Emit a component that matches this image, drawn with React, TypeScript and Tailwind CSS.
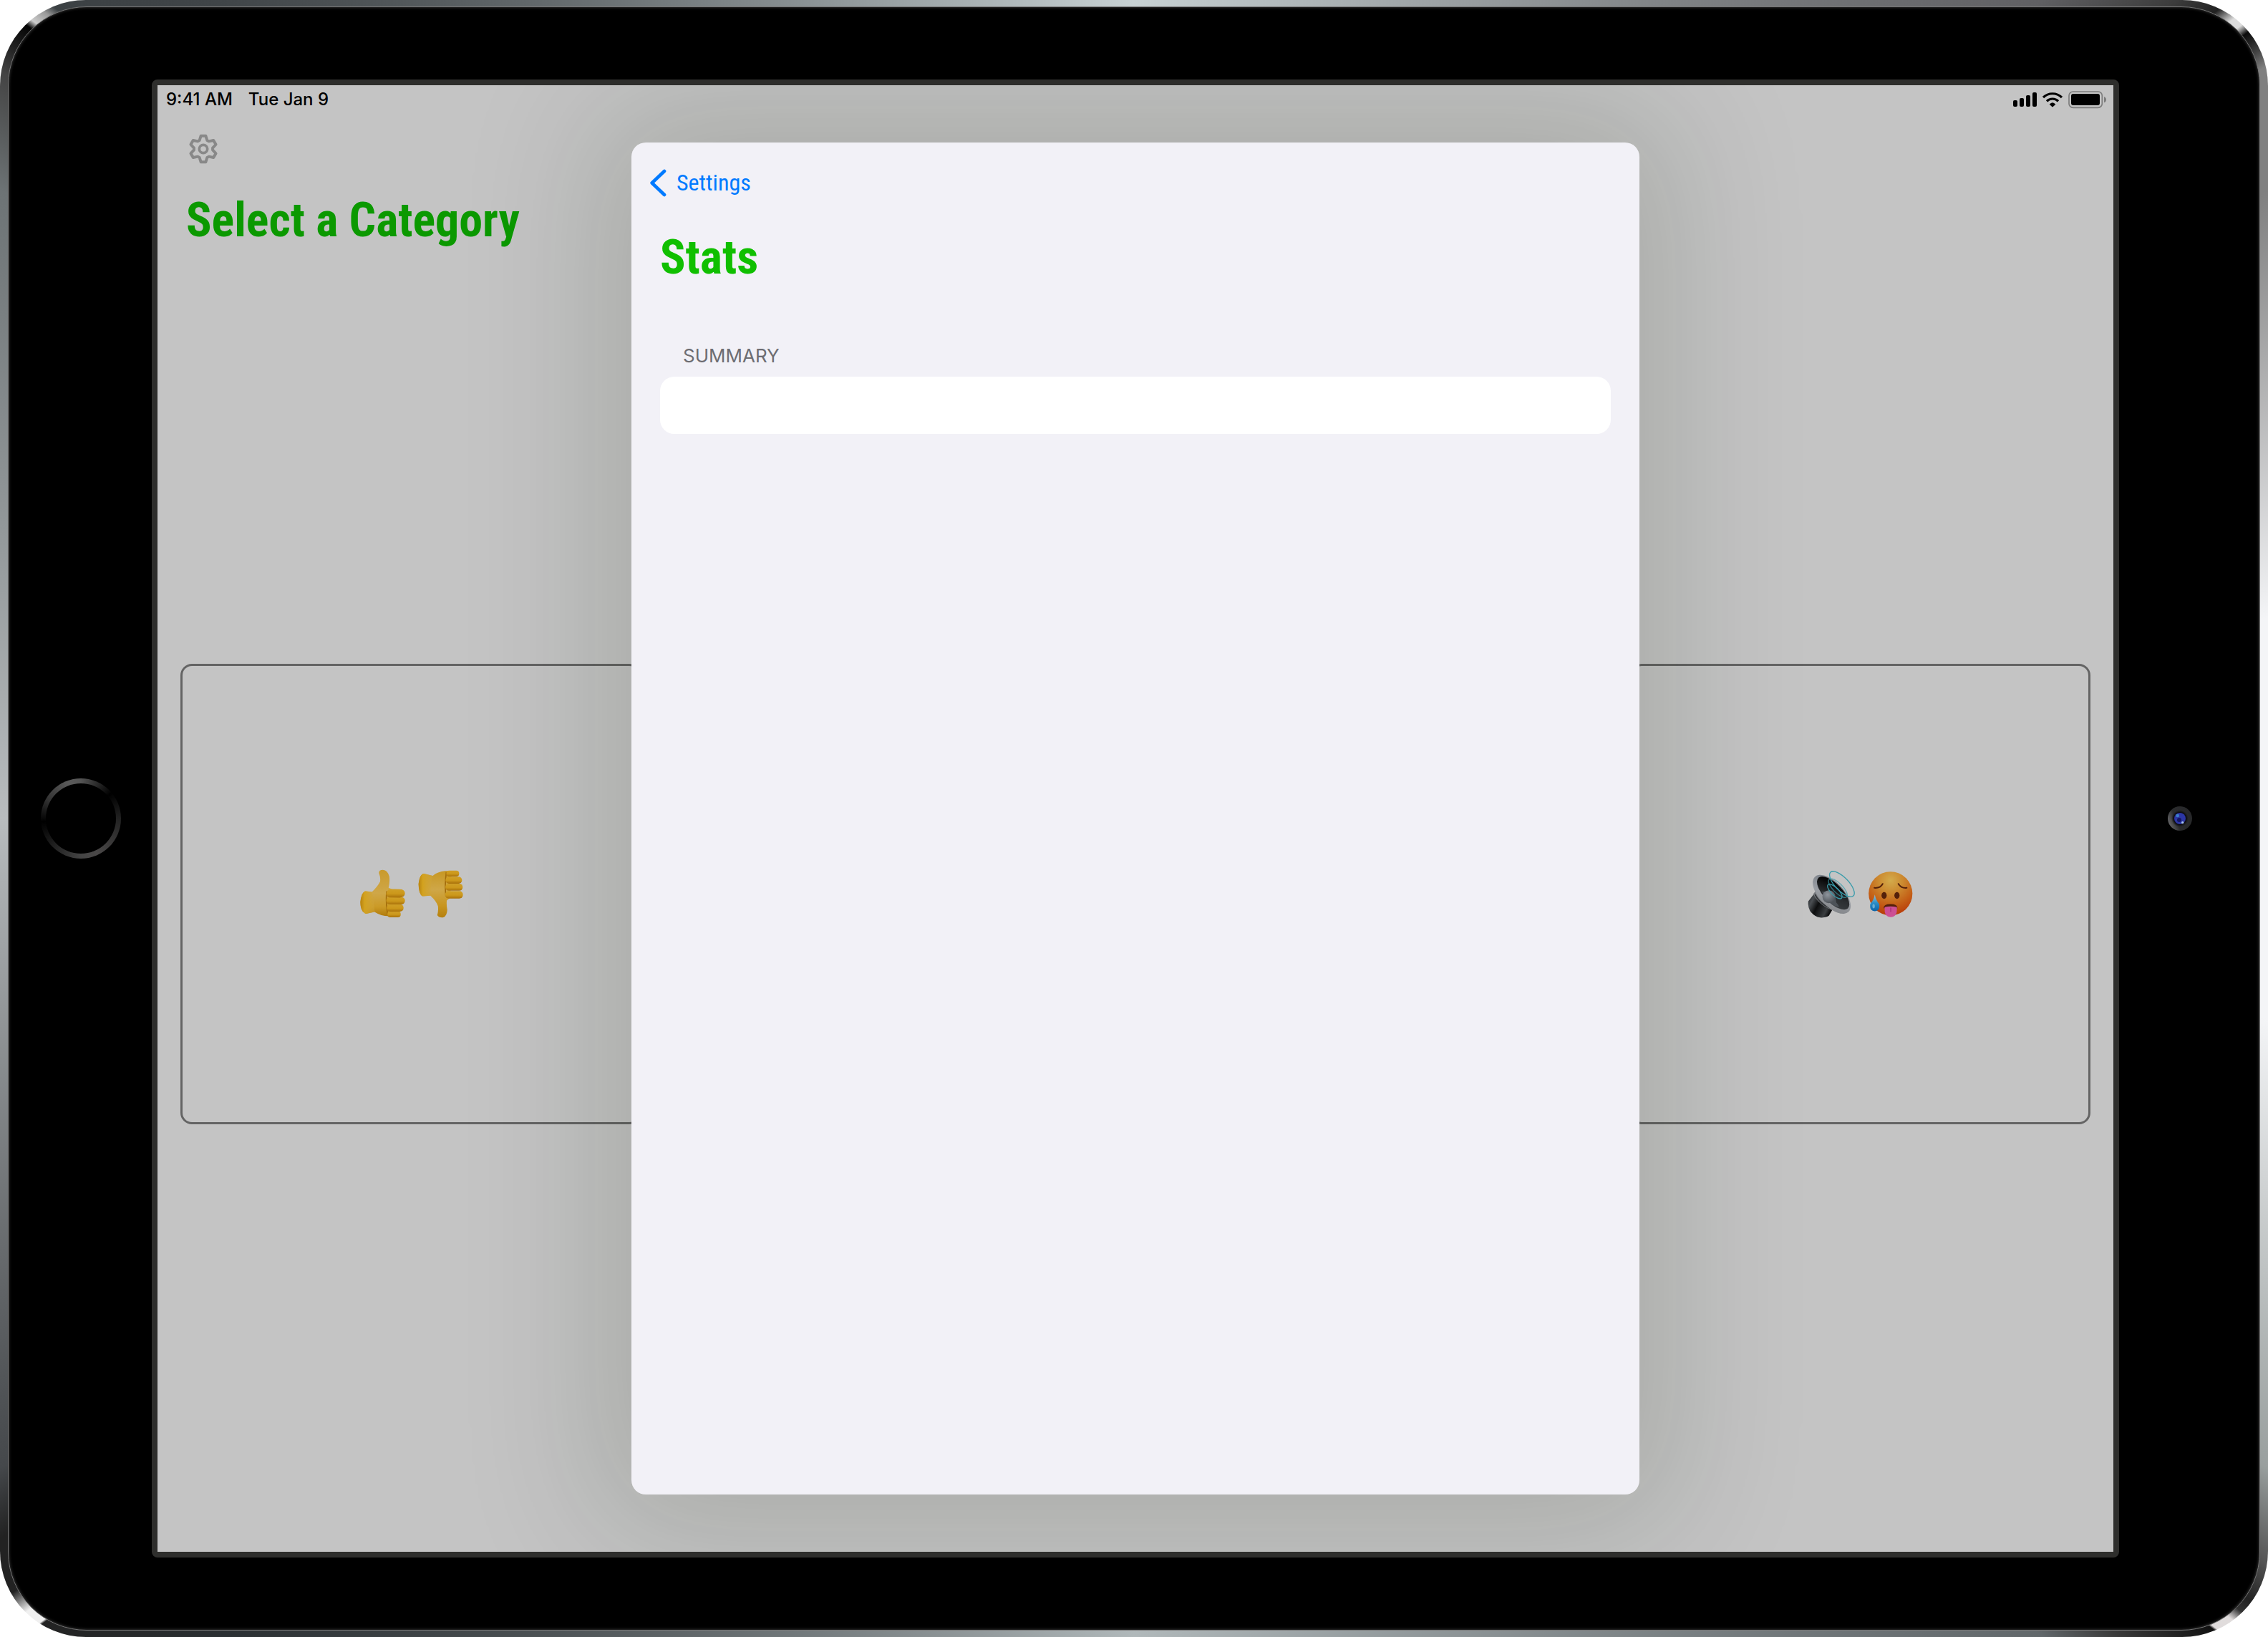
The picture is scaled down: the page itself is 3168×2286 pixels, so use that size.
import React from "react";

const gearOutline = (() => {
  const tooth: [number, number][] = [
    [-16, -36],
    [-10, -55],
    [10, -55],
    [16, -36],
  ];
  const points: string[] = [];
  for (let i = 0; i < 6; i++) {
    const a = (i * Math.PI) / 3;
    for (const [x, y] of tooth) {
      points.push(
        `${(x * Math.cos(a) - y * Math.sin(a)).toFixed(1)} ${(x * Math.sin(a) + y * Math.cos(a)).toFixed(1)}`,
      );
    }
  }
  return `M${points.join("L")}Z`;
})();

function GearIcon() {
  return (
    <svg viewBox="-60 -63 120 126" className="h-[42px] w-10" fill="none" stroke="#888888" aria-hidden="true">
      <path d={gearOutline} strokeWidth="12" strokeLinejoin="round" />
      <circle r="17" strokeWidth="11" />
    </svg>
  );
}

function StatusIcons() {
  return (
    <svg viewBox="150 78 402 78" className="h-[26px] w-[134px]" role="img" aria-label="Signal, Wi-Fi and battery">
      <rect x="156" y="120" width="18" height="27" rx="6" />
      <rect x="183" y="111" width="18" height="36" rx="6" />
      <rect x="210" y="99" width="18" height="48" rx="6" />
      <rect x="237" y="87" width="18" height="60" rx="6" />
      <g fill="none" stroke="#000000" strokeWidth="9.5">
        <path d="M282 108A56 56 0 0 1 360 108" />
        <path d="M297 124A34 34 0 0 1 345 124" />
      </g>
      <path d="M308 137Q321 122 334 137L324 146Q321 149 318 146Z" />
      <rect x="390" y="84" width="139" height="67" rx="17" fill="none" stroke="#7c7c7c" strokeWidth="5" />
      <rect x="399" y="93" width="120" height="48" rx="9" />
      <path d="M537 105Q546 109 546 117.500Q546 126 537 130Z" fill="#7c7c7c" />
    </svg>
  );
}

function ThumbsEmoji() {
  return (
    <svg viewBox="91 100 444 205" className="h-[68px] w-[148px]" role="img" aria-label="Thumbs up and thumbs down">
      <defs>
        <linearGradient id="palm" x1="0" y1="0" x2="0" y2="1">
          <stop offset="0" stopColor="#c99a2c" />
          <stop offset="0.5" stopColor="#cfa748" />
          <stop offset="0.8" stopColor="#cb9a26" />
          <stop offset="1" stopColor="#b07a0c" />
        </linearGradient>
        <linearGradient id="palmDown" x1="0" y1="0" x2="0" y2="1">
          <stop offset="0" stopColor="#c79722" />
          <stop offset="0.4" stopColor="#cfa748" />
          <stop offset="0.75" stopColor="#c8951f" />
          <stop offset="1" stopColor="#b5800f" />
        </linearGradient>
        <linearGradient id="finger" x1="0" y1="0" x2="0" y2="1">
          <stop offset="0" stopColor="#cf9f26" />
          <stop offset="0.55" stopColor="#cc981b" />
          <stop offset="1" stopColor="#a8700a" />
        </linearGradient>
        <linearGradient id="wrist" x1="0" y1="0" x2="1" y2="0">
          <stop offset="0" stopColor="#b8830f" />
          <stop offset="0.3" stopColor="#d3a21f" />
          <stop offset="1" stopColor="#cfa53c" stopOpacity="0.4" />
        </linearGradient>
      </defs>
      <path
        d="M122 192L149 195Q172 173 183 152Q186 135 178 115Q178 102 195 102Q215 103 222 130Q225 152 219 178Q232 184 245 186L250 290L222 297Q190 298 160 279L124 287Q101 281 100 238Q104 194 122 192Z"
        fill="url(#palm)"
      />
      <path d="M122 192L149 195Q158 235 160 279L124 287Q101 281 100 238Q104 194 122 192Z" fill="url(#wrist)" />
      <path d="M211 192Q206 240 216 296" fill="none" stroke="#a36c0a" strokeWidth="5" />
      <rect x="214" y="276" width="56" height="26" rx="12" fill="url(#finger)" />
      <rect x="211" y="247" width="71" height="31" rx="15" fill="url(#finger)" />
      <rect x="209" y="216" width="79" height="32" rx="16" fill="url(#finger)" />
      <path d="M219 185Q235 181 265 184Q287 184 288 201Q287 217 266 219L222 218Q208 214 209 203Q211 190 219 185Z" fill="url(#finger)" />

      <path
        d="M368 118L405 127Q425 110 456 107L485 106L478 220L464 231Q462 248 466 270Q465 295 450 302Q432 305 424 293Q429 275 427 255Q420 234 395 211L362 213Q346 207 345 162Q350 119 368 118Z"
        fill="url(#palmDown)"
      />
      <path d="M368 118L405 127Q393 165 397 211L362 213Q346 207 345 162Q350 119 368 118Z" fill="url(#wrist)" />
      <path d="M462 112Q455 165 460 214" fill="none" stroke="#a36c0a" strokeWidth="5" />
      <rect x="462" y="105" width="54" height="25" rx="12" fill="url(#finger)" />
      <rect x="459" y="131" width="69" height="29" rx="14" fill="url(#finger)" />
      <rect x="458" y="160" width="73" height="30" rx="15" fill="url(#finger)" />
      <rect x="457" y="191" width="75" height="32" rx="15" fill="url(#finger)" />
    </svg>
  );
}

function LoudHotEmoji() {
  return (
    <svg viewBox="105 105 445 200" className="h-[67px] w-[148px]" role="img" aria-label="Loudspeaker and hot face">
      <defs>
        <linearGradient id="magnet" x1="0" y1="0" x2="1" y2="0.5">
          <stop offset="0" stopColor="#16181a" />
          <stop offset="0.25" stopColor="#4a4e52" />
          <stop offset="0.5" stopColor="#0c0d0e" />
          <stop offset="0.85" stopColor="#3a3d40" />
          <stop offset="1" stopColor="#0d0e0f" />
        </linearGradient>
        <linearGradient id="rim" x1="0" y1="0" x2="1" y2="1">
          <stop offset="0" stopColor="#6f757d" />
          <stop offset="0.5" stopColor="#9b9fa5" />
          <stop offset="1" stopColor="#7c7e81" />
        </linearGradient>
        <linearGradient id="cone" x1="0" y1="0" x2="1" y2="1">
          <stop offset="0.2" stopColor="#050505" />
          <stop offset="0.6" stopColor="#2b2e31" />
          <stop offset="1" stopColor="#3c4043" />
        </linearGradient>
        <radialGradient id="dome" cx="0.4" cy="0.35" r="0.7">
          <stop offset="0" stopColor="#8f969e" />
          <stop offset="1" stopColor="#4c5157" />
        </radialGradient>
        <radialGradient id="face" cx="0.5" cy="0.2" r="0.8">
          <stop offset="0" stopColor="#d3ab4c" />
          <stop offset="0.35" stopColor="#cc8a30" />
          <stop offset="0.7" stopColor="#c45f16" />
          <stop offset="1" stopColor="#b83a08" />
        </radialGradient>
        <linearGradient id="drop" x1="0" y1="0" x2="0" y2="1">
          <stop offset="0" stopColor="#9cc4d4" />
          <stop offset="0.5" stopColor="#2c8fc6" />
          <stop offset="1" stopColor="#0b63a8" />
        </linearGradient>
      </defs>
      <path d="M135 200L108 235Q104 262 118 280Q140 305 165 304Q185 303 194 296L214 262Z" fill="url(#magnet)" />
      <path d="M140 190L128 206Q150 250 206 272L236 272Z" fill="#73767a" />
      <path d="M136 207Q155 247 209 268" fill="none" stroke="#303336" strokeWidth="5" />
      <ellipse cx="206" cy="206" rx="102" ry="51" transform="rotate(46 206 206)" fill="url(#rim)" />
      <ellipse cx="212" cy="201" rx="89" ry="39" transform="rotate(46 212 201)" fill="url(#cone)" />
      <path d="M165 195Q185 195 195 190L222 218L225 240Q238 255 236 260Q190 250 165 195Z" fill="#4d5359" />
      <circle cx="194" cy="216" r="27" fill="url(#dome)" />
      <g fill="none" stroke="#3a9cab" strokeWidth="4">
        <ellipse cx="219" cy="194" rx="40" ry="16" transform="rotate(45 219 194)" />
        <ellipse cx="232" cy="180" rx="52" ry="20" transform="rotate(45 232 180)" strokeOpacity="0.7" />
        <ellipse cx="249" cy="163" rx="69" ry="28" transform="rotate(46 249 163)" />
      </g>

      <circle cx="453" cy="203" r="92" fill="url(#face)" />
      <g fill="none" stroke="#54200a" strokeWidth="6" strokeLinecap="round">
        <path d="M385 179Q410 181 420 162" />
        <path d="M486 162Q497 181 521 179" />
      </g>
      <ellipse cx="426" cy="211" rx="11" ry="14" fill="#54200a" />
      <ellipse cx="480" cy="211" rx="11" ry="14" fill="#54200a" />
      <path d="M424 265Q423 247 453 247Q483 247 482 265Q453 257 424 265Z" fill="#54200a" />
      <path d="M428 260Q453 254 480 260L479 282Q474 302 454 302Q434 302 429 282Z" fill="#cc4f95" />
      <path d="M454 262L454 280" stroke="#a82f78" strokeWidth="4" />
      <path d="M387 207Q391 230 405 246Q411 275 387 277Q363 275 368 246Q383 230 387 207Z" fill="url(#drop)" />
      <ellipse cx="382" cy="256" rx="5" ry="9" fill="#8cc3dd" opacity="0.7" />
    </svg>
  );
}

function CameraLens() {
  return (
    <svg viewBox="-51 -51 102 102" className="size-[34px]" aria-hidden="true">
      <defs>
        <linearGradient id="lensRing" x1="0" y1="0.7" x2="1" y2="0.3">
          <stop offset="0" stopColor="#6a6a6c" />
          <stop offset="0.35" stopColor="#2a2b2d" />
          <stop offset="1" stopColor="#262729" />
        </linearGradient>
        <radialGradient id="lensWell">
          <stop offset="0.7" stopColor="#08080c" />
          <stop offset="1" stopColor="#1a1a1c" stopOpacity="0" />
        </radialGradient>
      </defs>
      <circle r="51" fill="url(#lensRing)" />
      <circle r="36" fill="url(#lensWell)" />
      <circle r="24" fill="#2c36a4" />
      <circle cx="-3" cy="6" r="9" fill="#141660" />
      <circle cx="-10" cy="-12" r="7" fill="#3d7fc8" />
      <circle cx="11" cy="17" r="5" fill="#a8c4ee" />
    </svg>
  );
}

function StatusBar() {
  return (
    <div className="flex h-10 items-center justify-between pr-2 pl-3 font-['Inter',sans-serif] text-2xl font-medium text-black">
      <div className="flex gap-[22px]">
        <span>9:41 AM</span>
        <span>Tue Jan 9</span>
      </div>
      <StatusIcons />
    </div>
  );
}

function Category({ children }: { children?: React.ReactNode }) {
  return (
    <button
      type="button"
      className="flex aspect-square flex-1 items-center justify-center rounded-2xl border-3 border-[#646464]"
    >
      {children}
    </button>
  );
}

function StatsSheet() {
  return (
    <section
      role="dialog"
      aria-labelledby="stats-title"
      className="flex w-full max-w-[1408px] flex-col rounded-[20px] bg-[#f2f1f7] shadow-[0_0_190px_50px_rgba(12,30,0,0.145)]"
    >
      <nav className="px-[26px] pt-8">
        <button
          type="button"
          className="flex h-12 items-center gap-[14px] font-['Roboto_Condensed','Open_Sans_Condensed','Roboto',sans-serif] text-[32px] leading-none text-[#007aff]"
        >
          <svg viewBox="143 167 69 117" className="h-[39px] w-[23px]" fill="none" stroke="currentColor" aria-hidden="true">
            <path d="M203 176L151 225.500L203 275" strokeWidth="14" strokeLinecap="round" strokeLinejoin="round" />
          </svg>
          Settings
        </button>
      </nav>
      <div className="flex flex-col px-10 pt-10">
        <h2
          id="stats-title"
          className="font-['Roboto_Condensed','Open_Sans_Condensed','Roboto',sans-serif] text-[66px] leading-[82px] font-bold text-[#10bf00]"
        >
          Stats
        </h2>
        <h3 className="mt-[76px] px-8 font-['Inter',sans-serif] text-[26px] leading-10 text-[#6d6d72]">SUMMARY</h3>
        <ul className="mt-[9px] rounded-[20px] bg-white">
          <li className="h-20" />
        </ul>
      </div>
    </section>
  );
}

export default function App() {
  return (
    <div className="bg-white">
      <div className="flex min-h-screen rounded-[120px] bg-[conic-gradient(#c8d2d4_0deg,#606063_48deg,#3c3c3c_51.9deg,#222222_53.3deg,#dddddd_54deg,#dddddd_54.4deg,#0a0a0a_54.8deg,#444444_55.7deg,#808080_56.4deg,#808080_61deg,#f4f5f7_80deg,#f4f5f7_100deg,#999f9e_119.8deg,#555555_123.3deg,#222222_125deg,#333333_125.6deg,#e0dcdc_126.1deg,#e0dcdc_126.8deg,#111111_126.9deg,#3a3a3a_129.7deg,#62686b_132deg,#b0b8ba_180deg,#2b3033_228deg,#222222_233.6deg,#f0f0f0_233.7deg,#f0f0f0_234.4deg,#222222_235.4deg,#222222_237.6deg,#45484b_240.2deg,#b8bcbe_270deg,#6d7375_299deg,#444444_303.4deg,#222222_304.5deg,#050505_305.6deg,#cccccc_305.9deg,#999999_306.5deg,#3c4144_306.9deg,#404548_311.7deg,#c8d2d4_360deg)] px-[11px] py-[9px]">
        <div className="flex flex-1 rounded-[110px] border border-[#777777] bg-black py-[101px] shadow-[inset_0_0_4px_#444444]">
          <div className="flex w-[200px] items-center pl-[45px]">
            <button
              type="button"
              aria-label="Home"
              className="size-28 rounded-full bg-[conic-gradient(#555555_0deg,#000000_50deg,#222222_90deg,#4a4848_155deg,#444444_180deg,#000000_265deg,#333333_300deg,#5a5a5a_340deg,#555555_360deg)] p-[7px]"
            >
              <span className="block size-full rounded-full bg-black" />
            </button>
          </div>

          <main className="relative flex flex-1 flex-col overflow-hidden rounded-lg border-8 border-[#2e2e2c] bg-[#c4c4c4]">
            <StatusBar />
            <header className="flex flex-col px-10 pt-7">
              <button type="button" aria-label="Settings" className="w-fit pl-1">
                <GearIcon />
              </button>
              <h1 className="mt-[38px] font-['Roboto_Condensed','Open_Sans_Condensed','Roboto',sans-serif] text-[66px] leading-[82px] font-bold text-[#0b9900]">
                Select a Category
              </h1>
            </header>
            <div className="mt-5 mb-10 flex flex-1 items-center gap-8 px-8">
              <Category>
                <ThumbsEmoji />
              </Category>
              <Category />
              <Category />
              <Category>
                <LoudHotEmoji />
              </Category>
            </div>
            <div className="absolute inset-0 flex justify-center py-20">
              <StatsSheet />
            </div>
          </main>

          <div className="flex w-[196px] items-center pl-[68px]">
            <CameraLens />
          </div>
        </div>
      </div>
    </div>
  );
}
